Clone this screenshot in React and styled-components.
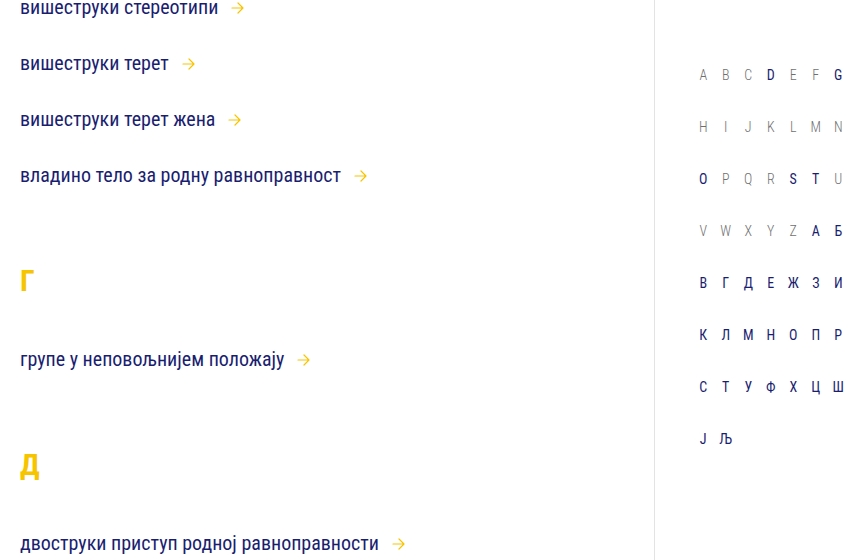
import styled, { createGlobalStyle } from 'styled-components'

const GlobalStyle = createGlobalStyle`
    html, body {
        margin: 0;
        padding: 0;
        background: #ffffff;
        overflow: hidden;
    }
    body {
        font-family: 'Roboto Condensed', Roboto, 'Liberation Sans', sans-serif;
    }
`

const sections = [
    {
        letter: null,
        terms: [
            'вишеструки стереотипи',
            'вишеструки терет',
            'вишеструки терет жена',
            'владино тело за родну равноправност',
        ],
    },
    { letter: 'Г', terms: ['групе у неповољнијем положају'] },
    { letter: 'Д', terms: ['двоструки приступ родној равноправности'] },
]

const latin = 'ABCDEFGHIJKLMNOPQRSTUVWXYZ'.split('')
const activeLatin = ['D', 'G', 'O', 'S', 'T']
const cyrillic = ['А', 'Б', 'В', 'Г', 'Д', 'Е', 'Ж', 'З', 'И', 'К', 'Л', 'М', 'Н', 'О', 'П', 'Р', 'С', 'Т', 'У', 'Ф', 'Х', 'Ц', 'Ш', 'Ј', 'Љ']

function ArrowIcon() {
    return (
        <svg width="13" height="12" viewBox="0 0 13 12" fill="none" stroke="#f6c500" strokeWidth="1.2" strokeLinecap="round" strokeLinejoin="round">
            <path d="M1 6h11M7 1l5 5-5 5" />
        </svg>
    )
}

export default function App() {
    return (
        <>
            <GlobalStyle />
            <Page>
                <Main>
                    {sections.map((s, i) => (
                        <Section key={i} $first={!s.letter}>
                            {s.letter && <SectionLetter>{s.letter}</SectionLetter>}
                            {s.terms.map((t) => (
                                <Term key={t} href="#">
                                    <span>{t}</span>
                                    <Arrow><ArrowIcon /></Arrow>
                                </Term>
                            ))}
                        </Section>
                    ))}
                </Main>
                <Sidebar>
                    <LetterGrid>
                        {latin.map((l) => (
                            <IndexLetter key={l} $active={activeLatin.includes(l)}>{l}</IndexLetter>
                        ))}
                        {cyrillic.map((l) => (
                            <IndexLetter key={'c' + l} $active>{l}</IndexLetter>
                        ))}
                    </LetterGrid>
                </Sidebar>
            </Page>
        </>
    )
}

const Page = styled.div`
    display: flex;
    width: 854px;
    height: 560px;
    overflow: hidden;
`

const Main = styled.div`
    width: 654px;
    flex-shrink: 0;
    padding-left: 20px;
    box-sizing: border-box;
    margin-top: -21px;
`

const Section = styled.div`
    display: flex;
    flex-direction: column;
    margin-top: ${(p) => (p.$first ? '0' : '62px')};
`

const SectionLetter = styled.h2`
    margin: 0 0 34px;
    height: 32px;
    line-height: 32px;
    font-family: 'Roboto Condensed', Roboto, sans-serif;
    font-size: 30px;
    font-weight: 700;
    letter-spacing: -1px;
    color: #f6c500;
`

const Term = styled.a`
    display: flex;
    align-items: center;
    height: 56px;
    text-decoration: none;
    font-size: 20px;
    font-weight: 400;
    color: #1a1e70;
    span {
        white-space: nowrap;
    }
`

const Arrow = styled.span`
    display: flex;
    margin-left: 13px;
    margin-top: 2px;
`

const Sidebar = styled.aside`
    flex: 1;
    border-left: 1px solid #e3e3e3;
    padding: 49px 0 0 37px;
`

const LetterGrid = styled.div`
    display: grid;
    grid-template-columns: repeat(7, 22.5px);
    grid-auto-rows: 52px;
`

const IndexLetter = styled.a`
    display: flex;
    align-items: center;
    justify-content: center;
    font-size: 14px;
    font-weight: ${(p) => (p.$active ? 400 : 300)};
    color: ${(p) => (p.$active ? '#1a1e70' : '#6f6f6f')};
`
